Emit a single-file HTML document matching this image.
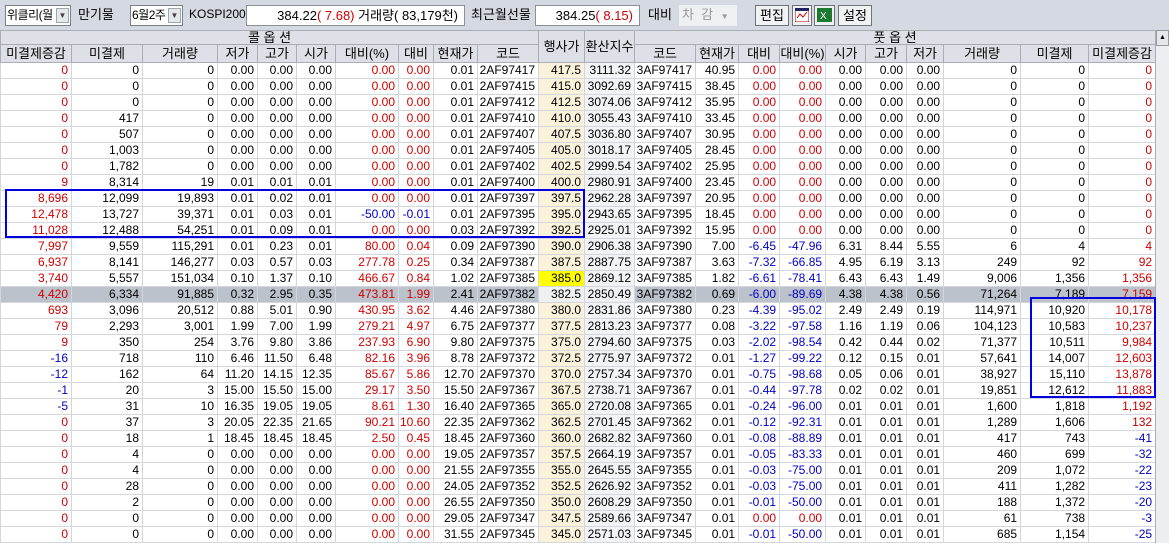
<!DOCTYPE html>
<html><head><meta charset="utf-8"><style>
*{box-sizing:border-box;margin:0;padding:0}
body{width:1169px;height:543px;overflow:hidden;background:#d5dae2;font-family:"Liberation Sans","Noto Sans CJK KR",sans-serif;font-size:12px;color:#000;position:relative}
.tb{position:absolute;top:0;left:0;width:1169px;height:30px;background:#d5dae2}
.a{position:absolute;top:5px;height:21px;line-height:19px;white-space:nowrap}
.sel{border:1px solid #7a7f88;background:#fff;padding-left:1px;font-size:12px;letter-spacing:-0.5px;overflow:hidden}
.sel i{position:absolute;right:1px;top:2px;width:13px;height:15px;background:#e6e8ec;border:1px solid #9aa;font-style:normal;font-size:8px;line-height:14px;text-align:center;color:#444;letter-spacing:0}
.box{background:#fff;border:1px solid #8a8f98;text-align:right;padding-right:6px;font-size:13px}
.btn{border:1px solid #6f747c;background:#f1f2f4;text-align:center;font-size:13px}
.r{color:#d00000}.b{color:#0000c8}
table{position:absolute;top:30px;left:0;border-collapse:collapse;table-layout:fixed;width:1155px;background:#fff}
td,th{border:1px solid #d3d6da;height:16px;line-height:15px;padding:0 3px 0 0;text-align:right;white-space:nowrap;overflow:hidden;font-weight:normal}
th{background:#dde1e7;border-color:#a9aeb5;text-align:center;padding:0;font-size:13px}
thead tr.h1 th{height:14px;line-height:13px}
thead tr.h2 th{height:18px;line-height:17px}
td.k{background:#fbf2dc}
td.y{background:#ffff00}
td.s{background:#f2f3f5}
tr.g td{background:#bcc2cb}
tr.g td.k,tr.g td.s{background:#eef0f2}
.bx{position:absolute;border:2px solid #0000e0}
.sb{position:absolute;left:1155px;top:30px;width:14px;height:513px;background:#eceef1;border-left:1px solid #a9aeb5}
.sb i{position:absolute;left:0;top:0;width:13px;height:16px;background:#e3e6ea;border:1px solid #999;font-size:7px;text-align:center;line-height:14px;font-style:normal}
</style></head><body>
<div class="tb">
<div class="a sel" style="left:5px;width:66px">위클리(월<i>▼</i></div>
<div class="a" style="left:78px;font-size:13px">만기물</div>
<div class="a sel" style="left:130px;width:53px">6월2주<i>▼</i></div>
<div class="a" style="left:189px">KOSPI200</div>
<div class="a box" style="left:246px;width:219px">384.22<span class="r">( 7.68)</span> 거래량( 83,179천)</div>
<div class="a" style="left:471px;font-size:13px">최근월선물</div>
<div class="a box" style="left:535px;width:105px">384.25<span class="r">( 8.15)</span></div>
<div class="a" style="left:648px;font-size:13px">대비</div>
<div class="a" style="left:679px;width:58px;background:#eef0f2;color:#999;padding-left:3px;font-size:13px">차 &nbsp;감 <span style="font-size:8px;margin-left:4px">▼</span></div>
<div class="a btn" style="left:755px;width:34px">편집</div>
<div class="a btn" style="left:792px;width:20px;padding:2px"><svg width="14" height="14"><rect x="0" y="0" width="14" height="14" fill="#fff" stroke="#a00"/><rect x="0" y="0" width="14" height="3" fill="#226"/><path d="M2 10 L5 6 L8 9 L12 4" stroke="#c00" fill="none"/></svg></div>
<div class="a btn" style="left:814px;width:21px;padding:2px"><svg width="15" height="14"><rect x="0" y="0" width="15" height="14" fill="#1e7a2e"/><text x="3" y="11" font-size="10" fill="#fff" font-family="Liberation Sans">X</text></svg></div>
<div class="a btn" style="left:838px;width:34px">설정</div>
</div>
<table>
<colgroup><col style="width:71px"><col style="width:71px"><col style="width:75px"><col style="width:40px"><col style="width:39px"><col style="width:39px"><col style="width:63px"><col style="width:35px"><col style="width:44px"><col style="width:61px"><col style="width:46px"><col style="width:50px"><col style="width:61px"><col style="width:43px"><col style="width:41px"><col style="width:46px"><col style="width:40px"><col style="width:41px"><col style="width:37px"><col style="width:77px"><col style="width:68px"><col style="width:67px"></colgroup>
<thead>
<tr class="h1"><th colspan="10">콜 옵 션</th><th rowspan="2">행사가</th><th rowspan="2">환산지수</th><th colspan="10">풋 옵 션</th></tr>
<tr class="h2"><th>미결제증감</th><th>미결제</th><th>거래량</th><th>저가</th><th>고가</th><th>시가</th><th>대비(%)</th><th>대비</th><th>현재가</th><th>코드</th><th>코드</th><th>현재가</th><th>대비</th><th>대비(%)</th><th>시가</th><th>고가</th><th>저가</th><th>거래량</th><th>미결제</th><th>미결제증감</th></tr>
</thead>
<tbody>
<tr><td class="r">0</td><td>0</td><td>0</td><td>0.00</td><td>0.00</td><td>0.00</td><td class="r">0.00</td><td class="r">0.00</td><td>0.01</td><td>2AF97417</td><td class="k">417.5</td><td class="s">3111.32</td><td>3AF97417</td><td>40.95</td><td class="r">0.00</td><td class="r">0.00</td><td>0.00</td><td>0.00</td><td>0.00</td><td>0</td><td>0</td><td class="r">0</td></tr>
<tr><td class="r">0</td><td>0</td><td>0</td><td>0.00</td><td>0.00</td><td>0.00</td><td class="r">0.00</td><td class="r">0.00</td><td>0.01</td><td>2AF97415</td><td class="k">415.0</td><td class="s">3092.69</td><td>3AF97415</td><td>38.45</td><td class="r">0.00</td><td class="r">0.00</td><td>0.00</td><td>0.00</td><td>0.00</td><td>0</td><td>0</td><td class="r">0</td></tr>
<tr><td class="r">0</td><td>0</td><td>0</td><td>0.00</td><td>0.00</td><td>0.00</td><td class="r">0.00</td><td class="r">0.00</td><td>0.01</td><td>2AF97412</td><td class="k">412.5</td><td class="s">3074.06</td><td>3AF97412</td><td>35.95</td><td class="r">0.00</td><td class="r">0.00</td><td>0.00</td><td>0.00</td><td>0.00</td><td>0</td><td>0</td><td class="r">0</td></tr>
<tr><td class="r">0</td><td>417</td><td>0</td><td>0.00</td><td>0.00</td><td>0.00</td><td class="r">0.00</td><td class="r">0.00</td><td>0.01</td><td>2AF97410</td><td class="k">410.0</td><td class="s">3055.43</td><td>3AF97410</td><td>33.45</td><td class="r">0.00</td><td class="r">0.00</td><td>0.00</td><td>0.00</td><td>0.00</td><td>0</td><td>0</td><td class="r">0</td></tr>
<tr><td class="r">0</td><td>507</td><td>0</td><td>0.00</td><td>0.00</td><td>0.00</td><td class="r">0.00</td><td class="r">0.00</td><td>0.01</td><td>2AF97407</td><td class="k">407.5</td><td class="s">3036.80</td><td>3AF97407</td><td>30.95</td><td class="r">0.00</td><td class="r">0.00</td><td>0.00</td><td>0.00</td><td>0.00</td><td>0</td><td>0</td><td class="r">0</td></tr>
<tr><td class="r">0</td><td>1,003</td><td>0</td><td>0.00</td><td>0.00</td><td>0.00</td><td class="r">0.00</td><td class="r">0.00</td><td>0.01</td><td>2AF97405</td><td class="k">405.0</td><td class="s">3018.17</td><td>3AF97405</td><td>28.45</td><td class="r">0.00</td><td class="r">0.00</td><td>0.00</td><td>0.00</td><td>0.00</td><td>0</td><td>0</td><td class="r">0</td></tr>
<tr><td class="r">0</td><td>1,782</td><td>0</td><td>0.00</td><td>0.00</td><td>0.00</td><td class="r">0.00</td><td class="r">0.00</td><td>0.01</td><td>2AF97402</td><td class="k">402.5</td><td class="s">2999.54</td><td>3AF97402</td><td>25.95</td><td class="r">0.00</td><td class="r">0.00</td><td>0.00</td><td>0.00</td><td>0.00</td><td>0</td><td>0</td><td class="r">0</td></tr>
<tr><td class="r">9</td><td>8,314</td><td>19</td><td>0.01</td><td>0.01</td><td>0.01</td><td class="r">0.00</td><td class="r">0.00</td><td>0.01</td><td>2AF97400</td><td class="k">400.0</td><td class="s">2980.91</td><td>3AF97400</td><td>23.45</td><td class="r">0.00</td><td class="r">0.00</td><td>0.00</td><td>0.00</td><td>0.00</td><td>0</td><td>0</td><td class="r">0</td></tr>
<tr><td class="r">8,696</td><td>12,099</td><td>19,893</td><td>0.01</td><td>0.02</td><td>0.01</td><td class="r">0.00</td><td class="r">0.00</td><td>0.01</td><td>2AF97397</td><td class="k">397.5</td><td class="s">2962.28</td><td>3AF97397</td><td>20.95</td><td class="r">0.00</td><td class="r">0.00</td><td>0.00</td><td>0.00</td><td>0.00</td><td>0</td><td>0</td><td class="r">0</td></tr>
<tr><td class="r">12,478</td><td>13,727</td><td>39,371</td><td>0.01</td><td>0.03</td><td>0.01</td><td class="b">-50.00</td><td class="b">-0.01</td><td>0.01</td><td>2AF97395</td><td class="k">395.0</td><td class="s">2943.65</td><td>3AF97395</td><td>18.45</td><td class="r">0.00</td><td class="r">0.00</td><td>0.00</td><td>0.00</td><td>0.00</td><td>0</td><td>0</td><td class="r">0</td></tr>
<tr><td class="r">11,028</td><td>12,488</td><td>54,251</td><td>0.01</td><td>0.09</td><td>0.01</td><td class="r">0.00</td><td class="r">0.00</td><td>0.03</td><td>2AF97392</td><td class="k">392.5</td><td class="s">2925.01</td><td>3AF97392</td><td>15.95</td><td class="r">0.00</td><td class="r">0.00</td><td>0.00</td><td>0.00</td><td>0.00</td><td>0</td><td>0</td><td class="r">0</td></tr>
<tr><td class="r">7,997</td><td>9,559</td><td>115,291</td><td>0.01</td><td>0.23</td><td>0.01</td><td class="r">80.00</td><td class="r">0.04</td><td>0.09</td><td>2AF97390</td><td class="k">390.0</td><td class="s">2906.38</td><td>3AF97390</td><td>7.00</td><td class="b">-6.45</td><td class="b">-47.96</td><td>6.31</td><td>8.44</td><td>5.55</td><td>6</td><td>4</td><td class="r">4</td></tr>
<tr><td class="r">6,937</td><td>8,141</td><td>146,277</td><td>0.03</td><td>0.57</td><td>0.03</td><td class="r">277.78</td><td class="r">0.25</td><td>0.34</td><td>2AF97387</td><td class="k">387.5</td><td class="s">2887.75</td><td>3AF97387</td><td>3.63</td><td class="b">-7.32</td><td class="b">-66.85</td><td>4.95</td><td>6.19</td><td>3.13</td><td>249</td><td>92</td><td class="r">92</td></tr>
<tr><td class="r">3,740</td><td>5,557</td><td>151,034</td><td>0.10</td><td>1.37</td><td>0.10</td><td class="r">466.67</td><td class="r">0.84</td><td>1.02</td><td>2AF97385</td><td class="y">385.0</td><td class="s">2869.12</td><td>3AF97385</td><td>1.82</td><td class="b">-6.61</td><td class="b">-78.41</td><td>6.43</td><td>6.43</td><td>1.49</td><td>9,006</td><td>1,356</td><td class="r">1,356</td></tr>
<tr class="g"><td class="r">4,420</td><td>6,334</td><td>91,885</td><td>0.32</td><td>2.95</td><td>0.35</td><td class="r">473.81</td><td class="r">1.99</td><td>2.41</td><td>2AF97382</td><td class="k">382.5</td><td class="s">2850.49</td><td>3AF97382</td><td>0.69</td><td class="b">-6.00</td><td class="b">-89.69</td><td>4.38</td><td>4.38</td><td>0.56</td><td>71,264</td><td>7,189</td><td class="r">7,159</td></tr>
<tr><td class="r">693</td><td>3,096</td><td>20,512</td><td>0.88</td><td>5.01</td><td>0.90</td><td class="r">430.95</td><td class="r">3.62</td><td>4.46</td><td>2AF97380</td><td class="k">380.0</td><td class="s">2831.86</td><td>3AF97380</td><td>0.23</td><td class="b">-4.39</td><td class="b">-95.02</td><td>2.49</td><td>2.49</td><td>0.19</td><td>114,971</td><td>10,920</td><td class="r">10,178</td></tr>
<tr><td class="r">79</td><td>2,293</td><td>3,001</td><td>1.99</td><td>7.00</td><td>1.99</td><td class="r">279.21</td><td class="r">4.97</td><td>6.75</td><td>2AF97377</td><td class="k">377.5</td><td class="s">2813.23</td><td>3AF97377</td><td>0.08</td><td class="b">-3.22</td><td class="b">-97.58</td><td>1.16</td><td>1.19</td><td>0.06</td><td>104,123</td><td>10,583</td><td class="r">10,237</td></tr>
<tr><td class="r">9</td><td>350</td><td>254</td><td>3.76</td><td>9.80</td><td>3.86</td><td class="r">237.93</td><td class="r">6.90</td><td>9.80</td><td>2AF97375</td><td class="k">375.0</td><td class="s">2794.60</td><td>3AF97375</td><td>0.03</td><td class="b">-2.02</td><td class="b">-98.54</td><td>0.42</td><td>0.44</td><td>0.02</td><td>71,377</td><td>10,511</td><td class="r">9,984</td></tr>
<tr><td class="b">-16</td><td>718</td><td>110</td><td>6.46</td><td>11.50</td><td>6.48</td><td class="r">82.16</td><td class="r">3.96</td><td>8.78</td><td>2AF97372</td><td class="k">372.5</td><td class="s">2775.97</td><td>3AF97372</td><td>0.01</td><td class="b">-1.27</td><td class="b">-99.22</td><td>0.12</td><td>0.15</td><td>0.01</td><td>57,641</td><td>14,007</td><td class="r">12,603</td></tr>
<tr><td class="b">-12</td><td>162</td><td>64</td><td>11.20</td><td>14.15</td><td>12.35</td><td class="r">85.67</td><td class="r">5.86</td><td>12.70</td><td>2AF97370</td><td class="k">370.0</td><td class="s">2757.34</td><td>3AF97370</td><td>0.01</td><td class="b">-0.75</td><td class="b">-98.68</td><td>0.05</td><td>0.06</td><td>0.01</td><td>38,927</td><td>15,110</td><td class="r">13,878</td></tr>
<tr><td class="b">-1</td><td>20</td><td>3</td><td>15.00</td><td>15.50</td><td>15.00</td><td class="r">29.17</td><td class="r">3.50</td><td>15.50</td><td>2AF97367</td><td class="k">367.5</td><td class="s">2738.71</td><td>3AF97367</td><td>0.01</td><td class="b">-0.44</td><td class="b">-97.78</td><td>0.02</td><td>0.02</td><td>0.01</td><td>19,851</td><td>12,612</td><td class="r">11,883</td></tr>
<tr><td class="b">-5</td><td>31</td><td>10</td><td>16.35</td><td>19.05</td><td>19.05</td><td class="r">8.61</td><td class="r">1.30</td><td>16.40</td><td>2AF97365</td><td class="k">365.0</td><td class="s">2720.08</td><td>3AF97365</td><td>0.01</td><td class="b">-0.24</td><td class="b">-96.00</td><td>0.01</td><td>0.01</td><td>0.01</td><td>1,600</td><td>1,818</td><td class="r">1,192</td></tr>
<tr><td class="r">0</td><td>37</td><td>3</td><td>20.05</td><td>22.35</td><td>21.65</td><td class="r">90.21</td><td class="r">10.60</td><td>22.35</td><td>2AF97362</td><td class="k">362.5</td><td class="s">2701.45</td><td>3AF97362</td><td>0.01</td><td class="b">-0.12</td><td class="b">-92.31</td><td>0.01</td><td>0.01</td><td>0.01</td><td>1,289</td><td>1,606</td><td class="r">132</td></tr>
<tr><td class="r">0</td><td>18</td><td>1</td><td>18.45</td><td>18.45</td><td>18.45</td><td class="r">2.50</td><td class="r">0.45</td><td>18.45</td><td>2AF97360</td><td class="k">360.0</td><td class="s">2682.82</td><td>3AF97360</td><td>0.01</td><td class="b">-0.08</td><td class="b">-88.89</td><td>0.01</td><td>0.01</td><td>0.01</td><td>417</td><td>743</td><td class="b">-41</td></tr>
<tr><td class="r">0</td><td>4</td><td>0</td><td>0.00</td><td>0.00</td><td>0.00</td><td class="r">0.00</td><td class="r">0.00</td><td>19.05</td><td>2AF97357</td><td class="k">357.5</td><td class="s">2664.19</td><td>3AF97357</td><td>0.01</td><td class="b">-0.05</td><td class="b">-83.33</td><td>0.01</td><td>0.01</td><td>0.01</td><td>460</td><td>699</td><td class="b">-32</td></tr>
<tr><td class="r">0</td><td>4</td><td>0</td><td>0.00</td><td>0.00</td><td>0.00</td><td class="r">0.00</td><td class="r">0.00</td><td>21.55</td><td>2AF97355</td><td class="k">355.0</td><td class="s">2645.55</td><td>3AF97355</td><td>0.01</td><td class="b">-0.03</td><td class="b">-75.00</td><td>0.01</td><td>0.01</td><td>0.01</td><td>209</td><td>1,072</td><td class="b">-22</td></tr>
<tr><td class="r">0</td><td>28</td><td>0</td><td>0.00</td><td>0.00</td><td>0.00</td><td class="r">0.00</td><td class="r">0.00</td><td>24.05</td><td>2AF97352</td><td class="k">352.5</td><td class="s">2626.92</td><td>3AF97352</td><td>0.01</td><td class="b">-0.03</td><td class="b">-75.00</td><td>0.01</td><td>0.01</td><td>0.01</td><td>411</td><td>1,282</td><td class="b">-23</td></tr>
<tr><td class="r">0</td><td>2</td><td>0</td><td>0.00</td><td>0.00</td><td>0.00</td><td class="r">0.00</td><td class="r">0.00</td><td>26.55</td><td>2AF97350</td><td class="k">350.0</td><td class="s">2608.29</td><td>3AF97350</td><td>0.01</td><td class="b">-0.01</td><td class="b">-50.00</td><td>0.01</td><td>0.01</td><td>0.01</td><td>188</td><td>1,372</td><td class="b">-20</td></tr>
<tr><td class="r">0</td><td>0</td><td>0</td><td>0.00</td><td>0.00</td><td>0.00</td><td class="r">0.00</td><td class="r">0.00</td><td>29.05</td><td>2AF97347</td><td class="k">347.5</td><td class="s">2589.66</td><td>3AF97347</td><td>0.01</td><td class="r">0.00</td><td class="r">0.00</td><td>0.01</td><td>0.01</td><td>0.01</td><td>61</td><td>738</td><td class="b">-3</td></tr>
<tr><td class="r">0</td><td>0</td><td>0</td><td>0.00</td><td>0.00</td><td>0.00</td><td class="r">0.00</td><td class="r">0.00</td><td>31.55</td><td>2AF97345</td><td class="k">345.0</td><td class="s">2571.03</td><td>3AF97345</td><td>0.01</td><td class="b">-0.01</td><td class="b">-50.00</td><td>0.01</td><td>0.01</td><td>0.01</td><td>685</td><td>1,154</td><td class="b">-25</td></tr>
</tbody></table>
<div class="sb"><i>▲</i></div>
<div class="bx" style="left:5px;top:189px;width:580px;height:49px"></div>
<div class="bx" style="left:1030px;top:297px;width:126px;height:101px"></div>
</body></html>
